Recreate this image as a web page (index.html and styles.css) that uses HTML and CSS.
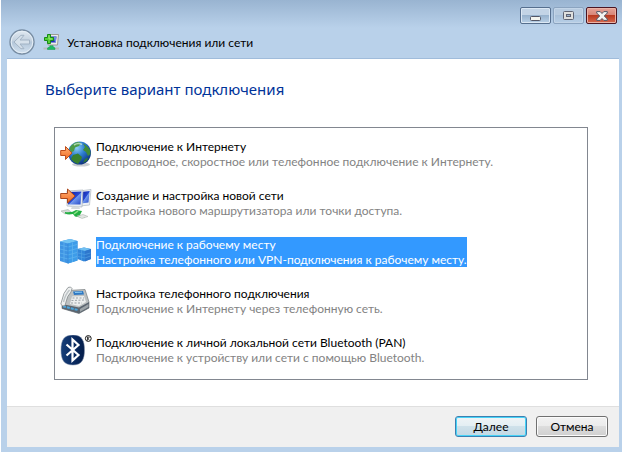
FILE: index.html
```html
<!DOCTYPE html>
<html lang="ru">

<head>
    <meta charset="UTF-8">
    <meta name="viewport" content="width=device-width, initial-scale=1.0">
    <title>Установка подключения или сети</title>
    <link rel="stylesheet" href="styles.css">
</head>

<body>

    <div class="window">
        <header class="titlebar">
            <div class="window-buttons">
                <button class="win-btn" type="button" aria-label="Свернуть">
                    <svg width="11" height="11" viewBox="0 0 11 11">
                        <rect x=".5" y="6.5" width="10" height="4" rx="1" fill="#f4f4ee" stroke="#535666" />
                    </svg>
                </button>
                <button class="win-btn disabled" type="button" aria-label="Развернуть" disabled>
                    <svg width="11" height="9" viewBox="0 0 11 9">
                        <rect x=".5" y=".5" width="10" height="8" rx="1" fill="#dfe0de" stroke="#5f6473" />
                        <rect x="3.5" y="3.5" width="4" height="2" fill="#9bb3d0" stroke="#5f6473" />
                    </svg>
                </button>
                <button class="win-btn close" type="button" aria-label="Закрыть">
                    <svg width="12" height="10" viewBox="0 0 12 10">
                        <path d="M.7 .6H4.2L6 2.5 7.800 .6H11.300V2L8.300 5 11.300 8V9.400H7.800L6 7.500 4.200 9.400H.7V8L3.700 5 .7 2Z" fill="#f3f3f0" stroke="#535666" />
                    </svg>
                </button>
            </div>
            <div class="caption">
                <button class="back" type="button" aria-label="Назад" disabled>
                    <svg width="26" height="26" viewBox="0 0 26 26">
                        <defs>
                            <linearGradient id="back-fill" x2="0" y2="1">
                                <stop offset="0" stop-color="#e2eaf2" />
                                <stop offset=".45" stop-color="#c3d1df" />
                                <stop offset=".5" stop-color="#b3c6d9" />
                                <stop offset="1" stop-color="#d3e2f0" />
                            </linearGradient>
                        </defs>
                        <circle cx="13" cy="13" r="12" fill="url(#back-fill)" stroke="#788da3" stroke-width="1.400" />
                        <circle cx="13" cy="13" r="10.800" fill="none" stroke="#e6eff7" />
                        <path d="M5 13 12 6.300H15L11 11H20.500V15H11L15 19.700H12Z" fill="#d6e1eb" stroke="#a2b3c4" stroke-linejoin="round" />
                    </svg>
                </button>
                <svg class="caption-icon" width="16" height="16" viewBox="0 0 16 16">
                    <path d="M.5 14.500H16" stroke="#b9bdbd" stroke-width="2" />
                    <path d="M4.500 15.500V14L7 12.500V10H10V12.500L12 14V15.500Z" fill="#1dbb62" stroke="#15994c" stroke-width=".5" />
                    <path d="M5 .5H15.500L14.500 11H5Z" fill="#eceee9" stroke="#9a9c96" />
                    <path d="M6 2.500H13.500L12.800 8.500H6Z" fill="#1d2fb5" />
                    <path d="M10.500 2.500H13.500L12.800 8.500H12Z" fill="#6f8ee6" />
                    <path d="M4.500 .5H7.500V3.500H10.500V6.500H7.500V9.500H4.500V6.500H1.500V3.500H4.500Z" fill="#55cf35" stroke="#178a17" />
                    <path d="M6 1.500V5H9" fill="none" stroke="#9bea74" />
                </svg>
                <span>Установка подключения или сети</span>
            </div>
        </header>

        <form class="wizard">
            <main class="page">
                <h1 id="heading">Выберите вариант подключения</h1>

                <div class="options" role="radiogroup" aria-labelledby="heading">
                    <label class="option">
                        <input type="radio" name="connection" value="internet">
                        <svg class="icon" width="32" height="32" viewBox="0 0 32 32">
                            <defs>
                                <radialGradient id="sea" cx=".38" cy=".28" r=".75">
                                    <stop offset="0" stop-color="#8fd0f5" />
                                    <stop offset=".45" stop-color="#2f80d1" />
                                    <stop offset="1" stop-color="#0a2f80" />
                                </radialGradient>
                                <linearGradient id="orange" x2="0" y2="1">
                                    <stop offset="0" stop-color="#ffb074" />
                                    <stop offset="1" stop-color="#f26a22" />
                                </linearGradient>
                            </defs>
                            <ellipse cx="21" cy="25.500" rx="9" ry="2" fill="#c9cdd0" />
                            <circle cx="19.500" cy="14" r="11.500" fill="url(#sea)" />
                            <path d="M9.500 9Q13 3.500 18 3L21 4 19 7 15 8.500 14 12 11 13.500Z" fill="#4c9b47" />
                            <path d="M23 4.500Q28 7 30 11L30.500 15 28 17 26 13 23 11 25 8Z" fill="#408c37" />
                            <path d="M13 16 18 14.500 22 18 21 21 18 25Q13 23 11 20Z" fill="#39812f" />
                            <path d="M25 20 28 18.500 27 22 23 24Z" fill="#2f7934" />
                            <path d="M14 6Q18 3.500 22 5.500" fill="none" stroke="#d5f1dc" stroke-width="1.500" opacity=".7" />
                            <path d="M.7 11.500H5.500V7.500L12 14 5.500 20.500V16.500H.7Z" fill="url(#orange)" stroke="#bd4c1b" />
                        </svg>
                        <span class="text">
                            <span class="name">Подключение к Интернету</span>
                            <span class="hint">Беспроводное, скоростное или телефонное подключение к Интернету.</span>
                        </span>
                    </label>

                    <label class="option">
                        <input type="radio" name="connection" value="network">
                        <svg class="icon" width="32" height="32" viewBox="0 0 32 32">
                            <defs>
                                <linearGradient id="screen" x2="1" y2="1">
                                    <stop offset="0" stop-color="#0818a0" />
                                    <stop offset=".5" stop-color="#2848d0" />
                                    <stop offset=".55" stop-color="#7198ed" />
                                    <stop offset="1" stop-color="#2346c8" />
                                </linearGradient>
                            </defs>
                            <path d="M19 3 31 1.500 29.500 17 20 18Z" fill="#edf1f5" stroke="#b0b9c2" stroke-width=".7" />
                            <path d="M21 4 29.700 3 28.500 14.500 21 15.500Z" fill="url(#screen)" />
                            <path d="M7 3 23 2 22 19 7 18Z" fill="#e8edf2" stroke="#a9b3bd" stroke-width=".7" />
                            <path d="M8 4 21.500 3.500 20.500 16.500 8 16.500Z" fill="url(#screen)" />
                            <path d="M12 18.500H19L20 21H11Z" fill="#d4d9dc" />
                            <path d="M1 23 8 21.500 11 24 5 26Z" fill="#d5d9d7" stroke="#9ba7a1" stroke-width=".5" />
                            <path d="M5 24Q12 25 16 22L22 23 20 27 26 28 24 30 15 28.500 13 26Q8 27 5 25.500Z" fill="#23af43" />
                            <path d="M14 26 18 23" stroke="#8ee289" stroke-width="1.500" />
                            <path d="M17 28 23 26.500 28 28.500 22 30.500Z" fill="#e3e5e3" stroke="#a8b0ab" stroke-width=".5" />
                            <path d="M.7 5.500H7.500V1L15 8 7.500 15V10.500H.7Z" fill="url(#orange)" stroke="#a9471d" />
                        </svg>
                        <span class="text">
                            <span class="name">Создание и настройка новой сети</span>
                            <span class="hint">Настройка нового маршрутизатора или точки доступа.</span>
                        </span>
                    </label>

                    <label class="option">
                        <input type="radio" name="connection" value="workplace" checked>
                        <svg class="icon" width="32" height="32" viewBox="0 0 32 32">
                            <path d="M0 4.500 10 2 17.500 4V23.500L8 26.500 0 24Z" fill="#3f94e3" />
                            <path d="M0 4.500 10 2 17.500 4 8 6.500Z" fill="#74c4f3" />
                            <path d="M8 6.500 17.500 4V23.500L8 26.500Z" fill="#3d9ce9" />
                            <path d="M0 8 8 10 17 7.500M0 12 8 14 17 11.500M0 16 8 18 17 15.500M0 20 8 22 17 19.500M4 6V25M12.500 5.500V25" fill="none" stroke="#62b4ef" stroke-width=".7" />
                            <path d="M8 6.500V26.500" stroke="#2f7fd5" stroke-width=".6" />
                            <path d="M17.500 12 24 10.500 31 12V22L24 24.500 17.500 22Z" fill="#3186da" />
                            <path d="M17.500 12 24 10.500 31 12 25 14Z" fill="#70bff1" />
                            <path d="M25 14 31 12V22L25 24.500Z" fill="#2e77cd" />
                            <path d="M18 16 25 17.500 30.500 16M18 19.500 25 21 30.500 19M21.500 13V23" fill="none" stroke="#55a6e6" stroke-width=".6" />
                        </svg>
                        <span class="text">
                            <span class="name">Подключение к рабочему месту</span>
                            <span class="hint">Настройка телефонного или VPN-подключения к рабочему месту.</span>
                        </span>
                    </label>

                    <label class="option">
                        <input type="radio" name="connection" value="dialup">
                        <svg class="icon" width="32" height="32" viewBox="0 0 32 32">
                            <path d="M2 18 8 4.500 25 3.500 29 16V22L19 27.500 2 22.500Z" fill="#bcc0c1" stroke="#777d80" stroke-width=".7" />
                            <path d="M2 18 19 21.500 29 16V22L19 27.500 2 22.500Z" fill="#5b6570" />
                            <path d="M3 20.300 18 24" stroke="#4ba5dc" stroke-width="2" stroke-dasharray="3 1" />
                            <path d="M20 23 28.500 18V21L20 26Z" fill="#9da4a8" />
                            <path d="M13 5.500 23 5 24 8.500 14 9Z" fill="#2f79c4" />
                            <path d="M15 6.500 22 6.200" stroke="#8acbf4" />
                            <path d="M12 10.500 24 10 26 16 19 20 10 18Z" fill="#eceeee" />
                            <path d="M12.500 12H24M11.500 14.500 24.500 14M11 17 22 17" stroke="#9aa1a6" stroke-dasharray="2 1.500" />
                            <path d="M8 1.500Q11 0 12 2.500L11 6Q7 10 6 16L5 19.500Q2 21 .8 18L2 14Q3 7 8 1.500Z" fill="#eff1f1" stroke="#858b8e" stroke-width=".8" />
                            <path d="M9.500 4Q5 9 3.500 16" fill="none" stroke="#bfc5c8" stroke-width="1.500" />
                        </svg>
                        <span class="text">
                            <span class="name">Настройка телефонного подключения</span>
                            <span class="hint">Подключение к Интернету через телефонную сеть.</span>
                        </span>
                    </label>

                    <label class="option">
                        <input type="radio" name="connection" value="bluetooth">
                        <svg class="icon" width="32" height="32" viewBox="0 0 32 32">
                            <defs>
                                <linearGradient id="bt" x2="1" y2="0">
                                    <stop offset="0" stop-color="#163f79" />
                                    <stop offset=".5" stop-color="#0b2c63" />
                                    <stop offset="1" stop-color="#041d49" />
                                </linearGradient>
                            </defs>
                            <path d="M13 0C22 0 24.500 6 24.500 15S22 30 13 30 1 25 1 15 4 0 13 0Z" fill="url(#bt)" stroke="#8291aa" stroke-width=".5" />
                            <path d="M6.500 9.500 18.500 20 12.500 25.500V4.500L18.500 10 6.500 20.500" fill="none" stroke="#fff" stroke-width="2.200" />
                            <circle cx="28.300" cy="3.500" r="2.900" fill="#fff" stroke="#111" />
                            <path d="M27.500 5.500V2H28.800Q30 2.700 28 3.700L29.500 5.300" fill="none" stroke="#111" stroke-width=".8" />
                        </svg>
                        <span class="text">
                            <span class="name">Подключение к личной локальной сети Bluetooth (PAN)</span>
                            <span class="hint">Подключение к устройству или сети с помощью Bluetooth.</span>
                        </span>
                    </label>
                </div>
            </main>

            <footer class="footer">
                <button class="btn default" type="submit">Далее</button>
                <button class="btn" type="button">Отмена</button>
            </footer>
        </form>
    </div>

</body>

</html>
```
FILE: styles.css
```css
* {
    box-sizing: border-box;
}

body {
    margin: 0;
    background: #fff;
    font-family: Lato, "Noto Sans", sans-serif;
    font-size: 12px;
    line-height: 15px;
    color: #000;
}

button {
    font: inherit;
    color: inherit;
    padding: 0;
}

.window {
    display: flex;
    flex-direction: column;
    min-height: 100vh;
    margin-left: 1px;
    padding: 0 3px 5px 6px;
    background: linear-gradient(#99b4d1, #b9d1ea 28px);
}

/* title bar */
.titlebar {
    padding: 7px 0 3px;
}

.window-buttons {
    display: flex;
    justify-content: flex-end;
    gap: 2px;
    padding-right: 2px;
}

.win-btn {
    display: flex;
    align-items: center;
    justify-content: center;
    width: 31px;
    height: 17px;
    border: 1px solid #566f8e;
    border-radius: 2px;
    background: linear-gradient(#c3d4e6 45%, #98b3ce 50%, #b9d0e6);
    box-shadow: inset 0 0 0 1px #dce8f4;
}

.win-btn.disabled {
    border-color: #8ba4c0;
    background: linear-gradient(#b7cbe0 45%, #a9c1da 50%, #b7cfe7);
    box-shadow: inset 0 0 0 1px #c3d5e8;
}

.win-btn.close {
    border-color: #4b1522;
    background: linear-gradient(#e5a398, #d88678 45%, #b93a20 50%, #d5694f);
    box-shadow: inset 0 0 0 1px #ebb3a5;
}

.caption {
    display: flex;
    align-items: center;
    gap: 8px;
    height: 31px;
    padding: 5px 0 0 2px;
}

.back {
    display: flex;
    border: 0;
    background: none;
}

/* wizard page */
.wizard {
    display: flex;
    flex-direction: column;
    flex: 1;
    border-top: 1px solid #a0bcdb;
    background: #fff;
}

.page {
    flex: 1;
    padding: 20px 31px 26px 38px;
}

h1 {
    margin: 0 0 27px;
    font-family: "Noto Sans", sans-serif;
    font-size: 15px;
    line-height: 21px;
    font-weight: normal;
    color: #003399;
}

.options {
    display: grid;
    gap: 17px;
    margin-left: 9px;
    padding: 11px 5px 12px;
    border: 1px solid #828790;
}

.option {
    display: flex;
    gap: 4px;
}

.option input {
    appearance: none;
    width: 0;
    margin: 0 -4px 0 0;
    outline: none;
}

.icon {
    flex: none;
}

.text {
    display: grid;
    align-self: flex-start;
}

.hint {
    color: #838383;
}

.option input:checked ~ .text {
    background: #3399ff;
    color: #fff;
}

.option input:checked ~ .text .hint {
    color: #fff;
}

/* footer */
.footer {
    display: flex;
    justify-content: flex-end;
    gap: 9px;
    padding: 9px 11px 10px;
    border-top: 1px solid #dfdfdf;
    background: #f0f0f0;
}

.btn {
    width: 72px;
    height: 21px;
    border: 1px solid #707070;
    border-radius: 3px;
    background: linear-gradient(#f2f2f2, #ebebeb 48%, #dddddd 50%, #cfcfcf);
    box-shadow: inset 0 0 0 1px #fbfbfb;
}

.btn.default {
    border-color: #3c7fb1;
    background: linear-gradient(#f0f4f6, #e3eef3 48%, #cfe1ea 50%, #c2d8e4);
    box-shadow: inset 0 0 0 1px #46d3f7;
}
```
